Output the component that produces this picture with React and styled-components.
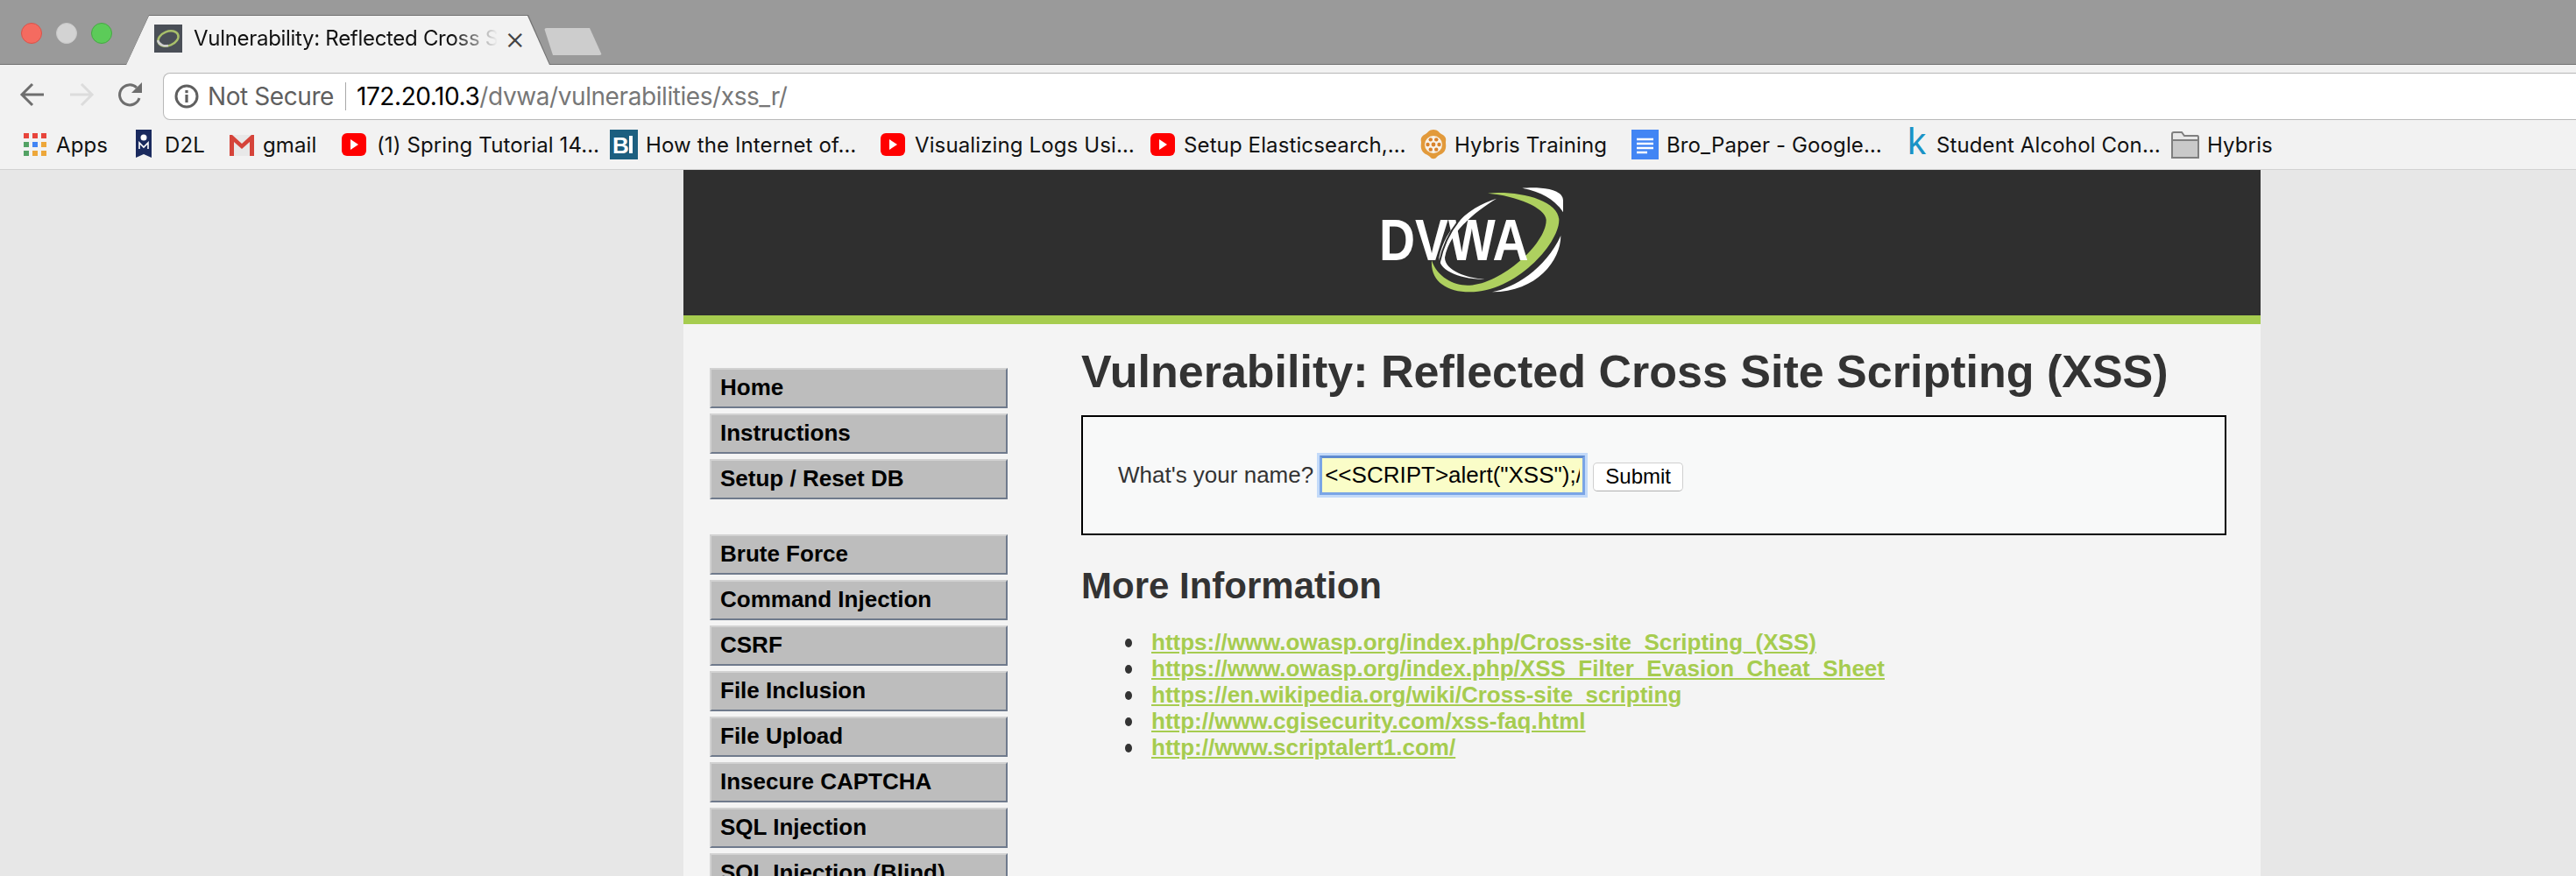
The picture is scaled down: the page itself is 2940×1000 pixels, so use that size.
import React from "react";
import styled, { createGlobalStyle } from "styled-components";

const Global = createGlobalStyle`
  html, body { margin: 0; padding: 0; background: #e7e7e7; }
  body { width: 2940px; height: 1000px; overflow: hidden; }
  * { box-sizing: border-box; }
`;
const Shell = styled.div`
  width: 2940px; height: 1000px; overflow: hidden; display: flex; flex-direction: column;
  font-family: Inter, "Liberation Sans", sans-serif;
`;
const TabStrip = styled.div`
  height: 74px; flex: none; background: #9a9a9a; border-bottom: 1px solid #717171;
  display: flex; align-items: flex-end; padding-left: 24px;
`;
const Lights = styled.div`
  display: flex; gap: 16px; align-self: flex-start; margin-top: 26px; margin-right: 16px;
`;
const Light = styled.span`
  width: 24px; height: 24px; border-radius: 50%; background: ${p => p.$c}; border: 1px solid ${p => p.$b};
`;
const Tab = styled.div`
  position: relative; width: 484px; height: 57px; margin-bottom: -1px; background: #717171;
  clip-path: polygon(0 100%, 26px 0, 459px 0, 100% 100%);
  display: flex; align-items: center; padding-left: 32px;
  &::before {
    content: ""; position: absolute; inset: 1px 0 0 0; background: #f2f2f2;
    clip-path: polygon(0 100%, 26px 0, 458px 0, 483px 100%);
  }
  & > * { position: relative; }
`;
const Favicon = styled.svg` width: 32px; height: 32px; flex: none; margin-top: -4px; `;
const TabTitle = styled.span`
  width: 347px; margin-left: 13px; margin-top: -4px; font-size: 24px; letter-spacing: -0.3px; color: #111; white-space: nowrap; overflow: hidden;
  -webkit-mask-image: linear-gradient(90deg, #000 85%, transparent 100%);
  mask-image: linear-gradient(90deg, #000 85%, transparent 100%);
`;
const TabClose = styled.span`
  margin-left: 8px; margin-top: -6px; font-size: 36px; line-height: 1; color: #444; font-weight: 300;
`;
const NewTab = styled.div`
  width: 66px; height: 31px; margin: 0 0 10px -7px; background: #cdcdcd;
  clip-path: polygon(0 0, 52px 0, 100% 100%, 10px 100%);
  border-radius: 3px;
`;
const Toolbar = styled.div`
  height: 63px; flex: none; background: #f2f2f2; display: flex; align-items: flex-end; padding-left: 22px;
`;
const NavButton = styled.svg`
  width: 30px; height: 30px; flex: none; margin: 0 26px 14px 0;
  color: ${p => (p.$dim ? "#dcdcdc" : "#6e6e6e")};
`;
const AddressBar = styled.div`
  flex: 1; height: 54px; margin-left: -4px; margin-right: -20px; background: #fff; border: 1px solid #b7b7b7;
  border-bottom-color: #b9b9b9; border-radius: 8px 0 0 8px; display: flex; align-items: center; padding-left: 12px;
  font-size: 28px; letter-spacing: -0.42px;
`;
const InfoIcon = styled.svg` width: 28px; height: 28px; flex: none; margin-right: 10px; color: #5f5f5f; `;
const NotSecure = styled.span` color: #5f5f5f; `;
const Divider = styled.span` width: 1px; height: 32px; background: #a8a8a8; margin: 0 12px 0 13px; `;
const Host = styled.span` color: #000; `;
const UrlPath = styled.span` color: #777; `;
const BookmarkBar = styled.div`
  height: 57px; flex: none; background: #f2f2f2; border-bottom: 1px solid #d2d2d2;
  display: flex; align-items: center; padding-left: 27px; font-size: 24px; letter-spacing: 0.12px; color: #111;
`;
const Bookmark = styled.div`
  width: ${p => p.$w}px; flex: none; display: flex; align-items: center; gap: ${p => p.$gap ?? 10}px; white-space: nowrap;
`;
const BmIcon = styled.svg` width: ${p => p.$w || 28}px; height: 34px; flex: none; `;
const KIcon = styled.span`
  font: 400 42px/34px "Liberation Sans", sans-serif; color: #1993c6; width: 18px; margin-top: -6px;
`;
const Page = styled.div`
  flex: 1; margin-left: 780px; width: 1800px; background: #f4f4f4; overflow: hidden;
  font-family: "Liberation Sans", Arial, sans-serif; color: #333;
`;
const Header = styled.header`
  height: 176px; background: #2f2f2f; border-bottom: 10px solid #a6cc4f; display: flex; justify-content: center; padding-top: 20px;
`;
const Logo = styled.svg` width: 212px; height: 122px; filter: blur(0.5px); `;
const Body = styled.div`
  display: grid; grid-template-columns: 454px 1307px;
`;
const Menu = styled.nav` padding: 50px 0 0 30px; `;
const MenuGroup = styled.div`
  display: flex; flex-direction: column; gap: 6px; width: 340px; margin-bottom: 40px;
`;
const MenuItem = styled.a`
  display: block; height: 46px; background: #bdbdbd; padding-left: 10px;
  border: 2px solid; border-color: #d2d2d2 #6f7a8c #6f7a8c #d2d2d2;
  font-size: 26px; font-weight: 700; line-height: 41px; color: #000;
`;
const Main = styled.main` padding-top: 24px; `;
const Title = styled.h1`
  margin: 0; font-size: 52px; line-height: 60px; font-weight: 700; color: #333; white-space: nowrap;
`;
const FormBox = styled.div`
  margin-top: 20px; height: 137px; background: #f8f9f9; border: 2px solid #000;
  display: flex; align-items: center; padding: 0 0 0 40px; font-size: 26px; color: #333;
`;
const NameInput = styled.input`
  width: 303px; height: 45px; margin-left: 7px; padding: 0 3px 0 3px; font: 26px "Liberation Sans", sans-serif; color: #000;
  background: #fafdc8; outline: none; border: 3px solid #7aa5e6; border-top-color: #5f8bd0;
  box-shadow: 0 0 0 3px #c3daf9;
`;
const SubmitButton = styled.button`
  width: 103px; height: 33px; margin: 3px 0 0 9px; padding: 0; background: #fff; border: 1px solid #cfcfcf; border-bottom-color: #b0b0b0;
  border-radius: 5px; font: 24px "Liberation Sans", sans-serif; color: #000;
`;
const SubTitle = styled.h2`
  margin: 34px 0 0; font-size: 42px; line-height: 48px; font-weight: 700; color: #333;
`;
const LinkList = styled.ul`
  margin: 25px 0 0; padding-left: 80px; list-style: none; font-size: 26px; line-height: 30px; color: #333;
`;
const LinkItem = styled.li`
  position: relative;
  &::before {
    content: ""; position: absolute; left: -30px; top: 11px; width: 8px; height: 10px; border-radius: 50%; background: #333;
  }
`;
const Link = styled.a`
  color: #a6cc4f; font-weight: 700; text-decoration: underline;
`;

const YouTube = () => (
  <BmIcon viewBox="0 0 28 34">
    <rect x="0" y="4" width="28" height="26" rx="6" fill="#f00" />
    <path d="M10 11 L19 17 L10 23 Z" fill="#fff" />
  </BmIcon>
);

const menuTop = ["Home", "Instructions", "Setup / Reset DB"];
const menuMain = ["Brute Force", "Command Injection", "CSRF", "File Inclusion", "File Upload", "Insecure CAPTCHA", "SQL Injection", "SQL Injection (Blind)"];
const links = [
  "https://www.owasp.org/index.php/Cross-site_Scripting_(XSS)",
  "https://www.owasp.org/index.php/XSS_Filter_Evasion_Cheat_Sheet",
  "https://en.wikipedia.org/wiki/Cross-site_scripting",
  "http://www.cgisecurity.com/xss-faq.html",
  "http://www.scriptalert1.com/",
];

export default function App() {
  return (
    <Shell>
      <Global />
      <TabStrip>
        <Lights>
          <Light $c="#f46b60" $b="#d9534a" />
          <Light $c="#d3d3d3" $b="#c8c8c8" />
          <Light $c="#5ccb59" $b="#46a844" />
        </Lights>
        <Tab>
          <Favicon viewBox="0 0 32 32">
            <rect width="32" height="32" fill="#4a4f57" />
            <ellipse cx="16" cy="16" rx="12" ry="8" fill="none" stroke="#a8bf6a" strokeWidth="2.5" transform="rotate(-22 16 16)" />
            <path d="M4 18 C6 24 12 25 16 24" fill="none" stroke="#cfcfcf" strokeWidth="2.5" />
          </Favicon>
          <TabTitle>Vulnerability: Reflected Cross S</TabTitle>
          <TabClose>×</TabClose>
        </Tab>
        <NewTab />
      </TabStrip>
      <Toolbar>
        <NavButton viewBox="0 0 30 30" fill="none" stroke="currentColor" strokeWidth="3">
          <path d="M28 15 H4 M15 3 L3 15 L15 27" />
        </NavButton>
        <NavButton $dim viewBox="0 0 30 30" fill="none" stroke="currentColor" strokeWidth="3">
          <path d="M2 15 H26 M15 3 L27 15 L15 27" />
        </NavButton>
        <NavButton viewBox="0 0 30 30" fill="none" stroke="currentColor" strokeWidth="3">
          <path d="M25 19 A11.5 11.5 0 1 1 22 7" />
          <path d="M28 1 V13 H16 Z" fill="currentColor" stroke="none" />
        </NavButton>
        <AddressBar>
          <InfoIcon viewBox="0 0 28 28" fill="none">
            <circle cx="14" cy="14" r="12" stroke="currentColor" strokeWidth="3" />
            <rect x="12.4" y="12" width="3.2" height="9" fill="currentColor" />
            <rect x="12.4" y="7" width="3.2" height="3.2" fill="currentColor" />
          </InfoIcon>
          <NotSecure>Not Secure</NotSecure>
          <Divider />
          <Host>172.20.10.3</Host>
          <UrlPath>/dvwa/vulnerabilities/xss_r/</UrlPath>
        </AddressBar>
      </Toolbar>
      <BookmarkBar>
        <Bookmark $w={128} $gap={11}>
          <BmIcon $w={26} viewBox="0 0 26 34">
            {[
              [0, 4, "#e8453c"], [10, 4, "#e8453c"], [20, 4, "#e8453c"],
              [0, 14, "#53a264"], [10, 14, "#4285f4"], [20, 14, "#eda73a"],
              [0, 24, "#53a264"], [10, 24, "#eda73a"], [20, 24, "#eda73a"],
            ].map(([x, y, c]) => <rect key={`${x}-${y}`} x={x} y={y} width="6" height="6" fill={c} />)}
          </BmIcon>
          Apps
        </Bookmark>
        <Bookmark $w={107} $gap={15}>
          <BmIcon $w={18} viewBox="0 0 18 34">
            <path d="M0 0 H18 V32 L9 28 L0 32 Z" fill="#1a2a5e" />
            <circle cx="9" cy="9" r="3.5" fill="#fff" />
            <path d="M4 22 V15 L9 20 L14 15 V22" stroke="#fff" strokeWidth="1.6" fill="none" />
          </BmIcon>
          D2L
        </Bookmark>
        <Bookmark $w={128}>
          <BmIcon viewBox="0 0 28 34">
            <path d="M0 6 H28 V30 H0 Z" fill="#e8e8e8" />
            <path d="M0 30 V6 H3 L14 16 L25 6 H28 V30 H23 V14 L14 22 L5 14 V30 Z" fill="#d5443a" />
          </BmIcon>
          gmail
        </Bookmark>
        <Bookmark $w={306} $gap={12}><YouTube />(1) Spring Tutorial 14…</Bookmark>
        <Bookmark $w={309} $gap={9}>
          <BmIcon $w={32} viewBox="0 0 32 34">
            <rect y="0" width="32" height="34" fill="#1c5f80" />
            <text x="3" y="27" fontFamily="Liberation Sans" fontWeight="700" fontSize="26" fill="#fff">B</text>
            <rect x="22" y="7" width="4" height="20" fill="#fff" />
          </BmIcon>
          How the Internet of…
        </Bookmark>
        <Bookmark $w={308} $gap={11}><YouTube />Visualizing Logs Usi…</Bookmark>
        <Bookmark $w={308} $gap={10}><YouTube />Setup Elasticsearch,…</Bookmark>
        <Bookmark $w={241} $gap={9}>
          <BmIcon $w={30} viewBox="0 0 30 34">
            <path d="M15 0 C20 0 21 3 24 5 C28 7 30 9 29 14 C29 17 30 20 28 24 C26 28 22 28 19 31 C17 34 13 34 11 31 C8 28 4 28 2 24 C0 20 1 17 1 14 C0 9 2 7 6 5 C9 3 10 0 15 0 Z" fill="#e29a3b" />
            <circle cx="15" cy="17" r="10" fill="#f8f2e8" />
            <circle cx="15" cy="17" r="2.4" fill="#d9822b" />
            {[0, 60, 120, 180, 240, 300].map(a => (
              <circle key={a} cx={15 + 6.5 * Math.cos(a * Math.PI / 180)} cy={17 + 6.5 * Math.sin(a * Math.PI / 180)} r="2.2" fill="#d9822b" />
            ))}
          </BmIcon>
          Hybris Training
        </Bookmark>
        <Bookmark $w={315} $gap={9}>
          <BmIcon $w={31} viewBox="0 0 31 34">
            <rect width="31" height="34" fill="#4285f4" />
            <path d="M6 11 H25 M6 16 H25 M6 21 H25 M6 26 H18" stroke="#fff" strokeWidth="2.4" />
          </BmIcon>
          Bro_Paper - Google…
        </Bookmark>
        <Bookmark $w={301} $gap={15}><KIcon>k</KIcon>Student Alcohol Con…</Bookmark>
        <Bookmark $w={120} $gap={9}>
          <BmIcon $w={32} viewBox="0 0 32 34">
            <path d="M1 5 Q1 3 3 3 H12 L15 7 H30 Q31 7 31 9 V32 H1 Z" fill="#e8e8e8" stroke="#7f7f7f" strokeWidth="2" />
            <rect x="2" y="13" width="28" height="18" fill="#c9c9c9" />
            <path d="M1 12 H31" stroke="#7f7f7f" strokeWidth="2" />
          </BmIcon>
          Hybris
        </Bookmark>
      </BookmarkBar>
      <Page>
        <Header>
          <Logo viewBox="0 0 636 366">
            <path d="M490 2 C540 -2 630 0 630 45 L630 85 C605 45 560 15 490 2Z" fill="#fff" />
            <path d="M622 165 C622 250 540 358 387 358 C460 345 570 280 622 165Z" fill="#fff" />
            <path d="M402 38 C330 60 230 120 205 240 C205 290 290 315 362 315 C300 310 225 285 225 240 C240 150 340 75 402 38Z" fill="#fff" />
            <path d="M372 20 C470 10 612 40 616 110 C618 190 470 358 310 358 C230 358 175 320 180 250 C200 310 260 338 310 335 C420 330 575 190 572 110 C570 70 470 28 372 20Z" fill="#aed05f" />
            <text x="0" y="248" textLength="512" lengthAdjust="spacingAndGlyphs" fontFamily="Liberation Sans" fontWeight="700" fontSize="200" fill="#fff">DVWA</text>
            <path d="M292 92 C245 140 218 200 205 262" fill="none" stroke="#2f2f2f" strokeWidth="6" />
          </Logo>
        </Header>
        <Body>
          <Menu>
            <MenuGroup>{menuTop.map(m => <MenuItem key={m}>{m}</MenuItem>)}</MenuGroup>
            <MenuGroup>{menuMain.map(m => <MenuItem key={m}>{m}</MenuItem>)}</MenuGroup>
          </Menu>
          <Main>
            <Title>Vulnerability: Reflected Cross Site Scripting (XSS)</Title>
            <FormBox>
              What's your name?
              <NameInput readOnly value={'<<SCRIPT>alert("XSS");//<</SCRIPT>'} />
              <SubmitButton>Submit</SubmitButton>
            </FormBox>
            <SubTitle>More Information</SubTitle>
            <LinkList>
              {links.map(l => <LinkItem key={l}><Link>{l}</Link></LinkItem>)}
            </LinkList>
          </Main>
        </Body>
      </Page>
    </Shell>
  );
}
